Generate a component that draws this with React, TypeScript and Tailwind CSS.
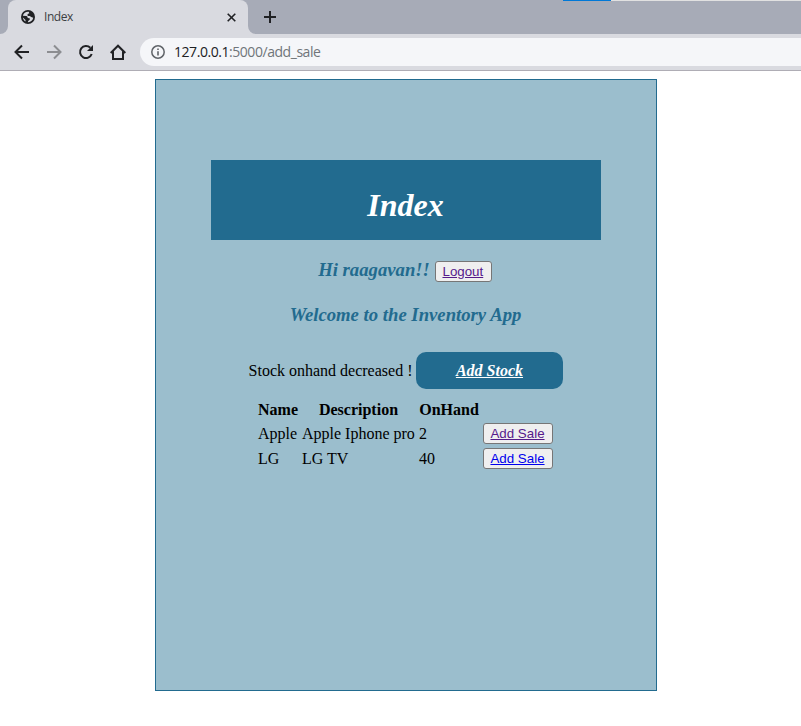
import type { ReactNode } from "react";

const serif = "font-['Liberation_Serif','Times_New_Roman',serif]";

function LinkButton({ children, visited, className = "" }: { children: ReactNode; visited?: boolean; className?: string }) {
  return (
    <button
      className={`flex h-[21px] items-center justify-center rounded-[3px] border border-[#767676] bg-[#efefef] pr-px font-['Liberation_Sans',Arial,sans-serif] text-[13.333px] leading-[15px] font-normal not-italic underline ${visited ? "text-[#551a8b]" : "text-[#0000ee]"} ${className}`}
    >
      {children}
    </button>
  );
}

function TabStrip() {
  return (
    <div className="relative flex h-[34px] bg-[#a7abb7]">
      <svg className="mt-[26px] h-2 w-2 shrink-0" viewBox="0 0 8 8">
        <path d="M8 0v8H0a8 8 0 0 0 8-8z" fill="#d9dae0" />
      </svg>
      <div className="flex w-60 shrink-0 items-center rounded-t-lg bg-[#d9dae0] pl-[13px]">
        <svg className="h-[14px] w-[14px] shrink-0" viewBox="0 0 14 14">
          <circle cx="7" cy="7" r="7" fill="#202124" />
          <path d="M7.8 1.8C5.2 1.4 2.5 3 1.9 5.7l3.4.4c1.1.2 1.5 1 1.3 1.9l1.7.3c.8.3.8 1.3.1 1.8l-1.2.8-.4 1.3c2.9.2 5.1-1.9 5.4-4.4l-2-.8-1.4-.9-1.8-.2c-.7-.4-.7-1.4-.2-2l1.5-.6z" fill="#d9dae0" />
          <path d="M1.8 7.6l2.7 2.3v1.5C3 10.7 2 9.3 1.8 7.6z" fill="#d9dae0" />
        </svg>
        <span className="ml-[9px] w-[174px] font-['Open_Sans','Noto_Sans',sans-serif] text-[12px] leading-4 tracking-[-0.45px] text-[#3c4043]">Index</span>
        <svg className="ml-[9px] h-[9px] w-[9px]" viewBox="0 0 9 9">
          <path d="M.7.7l7.6 7.6M8.3.7L.7 8.3" stroke="#202124" strokeWidth="1.6" />
        </svg>
      </div>
      <svg className="mt-[26px] h-2 w-2 shrink-0" viewBox="0 0 8 8">
        <path d="M0 0v8h8a8 8 0 0 1-8-8z" fill="#d9dae0" />
      </svg>
      <svg className="mt-[11px] ml-2 h-3 w-3" viewBox="0 0 12 12">
        <path d="M6 0v12M0 6h12" stroke="#202124" strokeWidth="2" />
      </svg>
      <div className="absolute top-0 right-0 flex h-px w-[238px] bg-[#e1e1e1]">
        <div className="h-px w-12 bg-[#0078d7]" />
      </div>
    </div>
  );
}

function Toolbar() {
  return (
    <div className="flex h-[37px] items-center border-b border-[#afadb5] bg-[#d9dae0] pl-[14px]">
      <svg className="h-4 w-4 shrink-0" viewBox="0 0 16 16" fill="none" stroke="#202124" strokeWidth="2">
        <path d="M15 8H2M8 1.5L1.5 8 8 14.5" />
      </svg>
      <svg className="ml-4 h-4 w-4 shrink-0" viewBox="0 0 16 16" fill="none" stroke="#8c8d91" strokeWidth="2">
        <path d="M1 8h13M8 1.5L14.5 8 8 14.5" />
      </svg>
      <svg className="ml-4 h-4 w-4 shrink-0" viewBox="0 0 16 16">
        <path d="M13.7 10A6 6 0 1 1 12.3 3.8" fill="none" stroke="#202124" strokeWidth="2" />
        <path d="M15 1v6H9z" fill="#202124" />
      </svg>
      <svg className="ml-4 h-4 w-4 shrink-0" viewBox="0 0 16 16" fill="none" stroke="#202124" strokeWidth="2">
        <path d="M.7 9L8 1.7 15.3 9M3 7.5V15h10V7.5" />
      </svg>
      <div className="ml-[14px] flex h-7 flex-1 items-center rounded-l-full bg-[#f5f6f9] pl-[11px]">
        <svg className="h-[14px] w-[14px] shrink-0" viewBox="0 0 14 14">
          <circle cx="7" cy="7" r="6.2" fill="none" stroke="#5f6368" strokeWidth="1.5" />
          <path d="M7 6.2v4.3M7 3.5V5" stroke="#5f6368" strokeWidth="1.6" />
        </svg>
        <span className="ml-[9px] font-['Open_Sans','Noto_Sans',sans-serif] text-[14px] leading-5 tracking-[-0.45px] text-[#70757a]">
          <span className="text-[#202124]">127.0.0.1</span>:5000/add_sale
        </span>
      </div>
    </div>
  );
}

const rows = [
  { name: "Apple", description: "Apple Iphone pro", onHand: 2, visited: true },
  { name: "LG", description: "LG TV", onHand: 40, visited: false },
];

export default function App() {
  return (
    <div className={`h-[726px] w-[801px] overflow-hidden bg-white text-black ${serif}`}>
      <TabStrip />
      <Toolbar />
      <main className="mt-2 ml-[155px] h-[612px] w-[502px] border border-[#226b8f] bg-[#9bbecd] px-[55px] pt-20">
        <h1 className="flex h-20 items-center justify-center bg-[#226b8f] pt-[9px] pr-px text-[32px] leading-9 font-bold text-white italic">Index</h1>
        <h3 className="mt-[19px] flex h-[22px] items-center justify-center gap-[5px] pr-0.5 text-[18.72px] leading-[22px] font-bold text-[#226b8f] italic">
          <span>Hi raagavan!!</span>
          <LinkButton visited className="mt-[3px] w-[57px]">Logout</LinkButton>
        </h3>
        <h3 className="mt-[23px] pr-px text-center text-[18.72px] leading-[22px] font-bold text-[#226b8f] italic">Welcome to the Inventory App</h3>
        <div className="mt-[26px] flex items-center justify-center gap-1 text-base leading-[18px]">
          <span>Stock onhand decreased !</span>
          <button className="h-[37px] w-[147px] rounded-[10px] bg-[#226b8f] pr-px font-bold text-white italic underline">Add Stock</button>
        </div>
        <table className="mt-2 ml-[43px] w-[303px] table-fixed border-separate border-spacing-x-1 border-spacing-y-1 text-base leading-[18px]">
          <colgroup>
            <col className="w-10" />
            <col className="w-[113px]" />
            <col className="w-[60px]" />
            <col className="w-[70px]" />
          </colgroup>
          <thead>
            <tr>
              <th className="p-0">Name</th>
              <th className="p-0">Description</th>
              <th className="p-0">OnHand</th>
              <th className="p-0" />
            </tr>
          </thead>
          <tbody>
            {rows.map((row) => (
              <tr key={row.name}>
                <td className="p-0">{row.name}</td>
                <td className="p-0 whitespace-nowrap">{row.description}</td>
                <td className="p-0">{row.onHand}</td>
                <td className="p-0">
                  <LinkButton visited={row.visited} className="w-[70px]">Add Sale</LinkButton>
                </td>
              </tr>
            ))}
          </tbody>
        </table>
      </main>
    </div>
  );
}
